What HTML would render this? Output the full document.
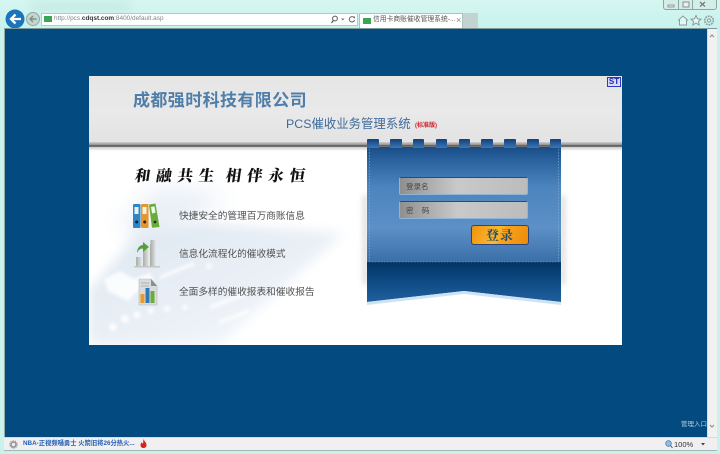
<!DOCTYPE html>
<html lang="zh-CN"><head><meta charset="utf-8"><title>信用卡商账催收管理系统</title>
<style>
*{box-sizing:border-box}
html,body{margin:0;padding:0;width:720px;height:454px;overflow:hidden}
body{position:relative;background:#c9f2ec;font-family:"Liberation Sans","Noto Sans CJK SC",sans-serif}
.a{position:absolute}
.t{position:absolute;white-space:nowrap;line-height:1}
</style></head><body>
<div class="a" style="left:0;top:0;width:720px;height:30px;background:linear-gradient(#d6f6f1,#c6f2ec)"></div>
<div class="a" style="left:30px;top:2px;width:100px;height:9px;background:#bfe6dc;filter:blur(5px);opacity:.7"></div>

<!-- nav buttons -->
<svg class="a" style="left:0;top:5px" width="42" height="26" viewBox="0 0 42 26">
<circle cx="33" cy="14" r="6.500" fill="#c4d6ce" stroke="#8fa8a0"/>
<path d="M36.500 14h-6M33 11l-3 3 3 3" fill="none" stroke="#7d8f88" stroke-width="1.400"/>
<circle cx="15" cy="14" r="9.500" fill="#1c75bb"/>
<path d="M21 14h-10M15.500 9.500L11 14l4.500 4.500" fill="none" stroke="#fff" stroke-width="2.300"/>
</svg>

<!-- address bar -->
<div class="a" style="left:41px;top:13px;width:317px;height:13px;background:#fff;border:1px solid #a9cfc9"></div>
<div class="a" style="left:44px;top:16px;width:8px;height:6px;background:#3aa655"></div>
<div class="t" style="left:54px;top:16px;font-size:6.450px;color:#7b8488">http://pcs.<b style="color:#2d3338">cdqst.com</b>:8400/default.asp</div>
<svg class="a" style="left:330px;top:14px" width="27" height="11" viewBox="0 0 27 11">
<circle cx="5" cy="4.500" r="2.400" fill="none" stroke="#555" stroke-width="1"/><path d="M3.300 6.500L1.500 9" stroke="#555" stroke-width="1.200"/>
<path d="M11 4.500h3.500l-1.750 2z" fill="#777"/>
<path d="M24 3.500a2.700 2.700 0 1 0 .6 2.500" fill="none" stroke="#666"/><path d="M22.500 2.500h2.500v2.200z" fill="#666"/>
</svg>

<!-- tab -->
<div class="a" style="left:359px;top:13px;width:104px;height:16px;background:#fff;border:1px solid #a9c5c2;border-bottom:0"></div>
<div class="a" style="left:463px;top:13px;width:15px;height:15px;background:#c3d3d0"></div>
<div class="a" style="left:363px;top:18px;width:8px;height:6px;background:#3aa655"></div>
<div class="t" style="left:373px;top:17px;font-size:6.800px;color:#555">信用卡商账催收管理系统-...</div>
<div class="t" style="left:456px;top:16px;font-size:9px;color:#888">×</div>

<!-- window controls -->
<div class="a" style="left:663px;top:0;width:54px;height:10px;background:#d2eee9;border:1px solid #8fa5a3;border-top:0;border-radius:0 0 3px 3px"></div>
<div class="a" style="left:678px;top:0;width:1px;height:10px;background:#8fa5a3"></div>
<div class="a" style="left:692px;top:0;width:1px;height:10px;background:#8fa5a3"></div>
<svg class="a" style="left:663px;top:0" width="54" height="10" viewBox="0 0 54 10">
<rect x="5" y="5" width="6" height="2" fill="#eee" stroke="#777" stroke-width=".7"/>
<rect x="20" y="2" width="6" height="5" fill="#eee" stroke="#777" stroke-width=".8"/>
<path d="M37 2l5 4.500M42 2l-5 4.500" stroke="#777" stroke-width="1.200"/>
</svg>
<svg class="a" style="left:676px;top:14px" width="40" height="13" viewBox="0 0 40 13">
<path d="M2 6.500L7 2l5 4.500M3.500 6v5h7V6" fill="#e4f7f4" stroke="#8b9c9b" stroke-width="1"/>
<path d="M20 1.500l1.500 3.300 3.500.4-2.600 2.300.8 3.500-3.200-1.900-3.200 1.900.8-3.500L15 5.200l3.500-.4z" fill="#e4f7f4" stroke="#8b9c9b"/>
<circle cx="33" cy="6.500" r="4.300" fill="none" stroke="#8b9c9b" stroke-width="1.600" stroke-dasharray="1.800 .9"/><circle cx="33" cy="6.500" r="1.700" fill="none" stroke="#8b9c9b"/>
</svg>

<!-- content frame -->
<div class="a" style="left:4px;top:28px;width:713px;height:1px;background:#7e9a9d"></div>
<div class="a" style="left:4px;top:28px;width:1px;height:410px;background:#90aaa8"></div>
<div class="a" style="left:5px;top:29px;width:702px;height:408px;background:#024a7f"></div>
<div class="a" style="left:707px;top:29px;width:10px;height:408px;background:#f1f1f1;border-left:1px solid #dcdcdc"></div>
<svg class="a" style="left:708px;top:33px" width="8" height="6" viewBox="0 0 8 6"><path d="M2 4l2-2 2 2" fill="none" stroke="#888"/></svg>
<svg class="a" style="left:708px;top:423px" width="8" height="6" viewBox="0 0 8 6"><path d="M2 2l2 2 2-2" fill="none" stroke="#888"/></svg>
<div class="t" style="left:681px;top:422px;font-size:6.500px;color:#b9cfe0">管理入口</div>

<!-- panel -->
<div class="a" style="left:89px;top:76px;width:533px;height:269px;background:#fff;overflow:hidden">
  <svg class="a" style="left:0;top:65px" width="533" height="204" viewBox="0 0 533 204">
    <defs>
      <filter id="b1" x="-20%" y="-20%" width="140%" height="140%"><feGaussianBlur stdDeviation="12"/></filter>
      <filter id="b2" x="-20%" y="-20%" width="140%" height="140%"><feGaussianBlur stdDeviation="1.500"/></filter>
      <filter id="b3" x="-20%" y="-20%" width="140%" height="140%"><feGaussianBlur stdDeviation="6"/></filter>
      <linearGradient id="wm" x1="0" y1="0" x2="1" y2="1"><stop offset="0" stop-color="#dbe5f0"/><stop offset=".6" stop-color="#ecf1f7"/><stop offset="1" stop-color="#fafcfd"/></linearGradient>
    </defs>
    <path d="M30 80L70 45 140 55 60 110z" fill="#e9eff6" filter="url(#b1)"/>
    <path d="M0 150L50 92 110 82 255 92 130 204H0z" fill="url(#wm)" filter="url(#b3)"/>
    <g filter="url(#b2)" fill="#fff" opacity=".85">
      <path d="M15 138l16-8 14 8 16-6 4 8-18 12-8 8-20-10z"/>
      <circle cx="24" cy="186" r="4"/><circle cx="36" cy="178" r="4"/><circle cx="48" cy="174" r="3.500"/><circle cx="62" cy="170" r="3"/><circle cx="78" cy="168" r="3"/><circle cx="96" cy="166" r="2.500"/>
      <circle cx="120" cy="125" r="3"/><circle cx="146" cy="115" r="2.500"/><circle cx="170" cy="110" r="2"/>
      <path d="M70 135l34-14 2 3-34 14zM120 165l36-14 2 3-36 14zM130 180l30-12 1 3-30 12z"/>
    </g>
  </svg>

  <!-- header -->
  <div class="a" style="left:0;top:0;width:533px;height:66px;background:linear-gradient(#e6e6e6,#e9e9e9 55%,#e3e3e3)"></div>
  <div class="a" style="left:0;top:66px;width:533px;height:3px;background:linear-gradient(#cfcfcf,#8f8f8f)"></div>
  <div class="a" style="left:0;top:69px;width:533px;height:2px;background:linear-gradient(#5f5f5f,#777)"></div>
  <div class="a" style="left:0;top:71px;width:533px;height:4px;background:linear-gradient(#c8c8c8,#fff)"></div>
</div>

<div class="t" style="left:133px;top:92px;font-size:17px;font-weight:700;letter-spacing:.4px;color:#4f7ea9">成都强时科技有限公司</div>
<div class="t" style="left:286px;top:118px;font-size:12.400px;color:#3e6b9b">PCS催收业务管理系统</div>
<div class="t" style="left:415px;top:123px;font-size:6px;font-weight:700;color:#d3202c">(标准版)</div>
<div class="a" style="left:607px;top:77px;width:14px;height:10px;background:#d9dcf5;border:1px solid #3038c8;color:#1c24b8;font:700 8px/8px 'Liberation Sans',sans-serif;text-align:center">ST</div>

<div class="t" style="left:135px;top:168px;font-family:'Noto Serif CJK SC',serif;font-size:15.500px;font-weight:900;color:#111;letter-spacing:5.800px;word-spacing:-4px;transform:skewX(-8deg)">和融共生 相伴永恒</div>

<!-- feature list -->
<svg class="a" style="left:132px;top:202px" width="30" height="26" viewBox="0 0 30 26">
<rect x="1" y="2" width="7.500" height="24" rx="1" fill="#2e86c4"/><rect x="2.500" y="5" width="4" height="7" fill="#e9f1f7"/><circle cx="4.700" cy="20" r="1.500" fill="#123"/>
<rect x="9" y="2" width="7.500" height="24" rx="1" fill="#e6962a"/><rect x="10.500" y="5" width="4" height="7" fill="#fbf2e0"/><circle cx="12.700" cy="20" r="1.500" fill="#321"/>
<path d="M17 2.500l6.500-1 4 23.500-7.500.7z" fill="#68ad3a"/><path d="M19 5l3.500-.7 1 6.500-3.500.7z" fill="#f0f7e6"/><circle cx="23" cy="20" r="1.400" fill="#232"/>
</svg>
<svg class="a" style="left:134px;top:239px" width="26" height="29" viewBox="0 0 26 29">
<defs><linearGradient id="g" x1="0" x2="1"><stop offset="0" stop-color="#a8aeaa"/><stop offset="1" stop-color="#dfe2df"/></linearGradient></defs>
<rect x="2" y="18" width="5.500" height="9" fill="url(#g)"/><rect x="9" y="10" width="5.500" height="17" fill="url(#g)"/><rect x="16" y="5" width="5.500" height="22" fill="url(#g)"/>
<rect x="17" y="1" width="5" height="26" fill="url(#g)" transform="translate(-.5 0)"/>
<path d="M3 14c0-5 3-8 6-8V3l6 5-6 5V9.500C6 9.500 4.500 11 3 14z" fill="#5a9e3a"/>
<rect x="0" y="27" width="26" height="1.500" fill="#c3c6c3"/>
</svg>
<svg class="a" style="left:135px;top:278px" width="24" height="29" viewBox="0 0 24 29">
<path d="M4 1h12l6 7v19H4z" fill="#d9dcdc" stroke="#b5b8b8" stroke-width=".6"/><path d="M16 1l6 7h-6z" fill="#8a8f92"/>
<path d="M6 5h8M6 8h8" stroke="#aeb2b2"/>
<rect x="5.500" y="16" width="4" height="9" fill="#ec9a25"/><rect x="10.500" y="10" width="4" height="15" fill="#2f78bd"/><rect x="15.500" y="13" width="4" height="12" fill="#6bad35"/>
</svg>
<div class="t" style="left:179px;top:212px;font-size:9.700px;color:#505050">快捷安全的管理百万商账信息</div>
<div class="t" style="left:179px;top:250px;font-size:9.700px;color:#505050">信息化流程化的催收模式</div>
<div class="t" style="left:179px;top:288px;font-size:9.700px;color:#505050">全面多样的催收报表和催收报告</div>

<!-- ribbon -->
<svg class="a" style="left:355px;top:135px" width="220" height="180" viewBox="0 0 220 180">
<defs>
<linearGradient id="r" x1="0" y1="0" x2="0" y2="1"><stop offset="0" stop-color="#1a4c86"/><stop offset=".12" stop-color="#2a64a0"/><stop offset=".35" stop-color="#4c84bd"/><stop offset=".7" stop-color="#5c90c6"/><stop offset="1" stop-color="#3b6fa8"/></linearGradient>
<linearGradient id="d" x1="0" y1="0" x2="0" y2="1"><stop offset="0" stop-color="#023464"/><stop offset=".5" stop-color="#0f4b85"/><stop offset="1" stop-color="#1f5f9e"/></linearGradient>
<linearGradient id="tk" x1="0" y1="0" x2="0" y2="1"><stop offset="0" stop-color="#133f78"/><stop offset="1" stop-color="#3a78b4"/></linearGradient>
<filter id="s" x="-50%" y="-20%" width="200%" height="140%"><feGaussianBlur stdDeviation="3"/></filter>
</defs>
<path d="M10 60V150M208 60V150" stroke="#999" stroke-width="3" filter="url(#s)" opacity=".5"/>
<path d="M12 12H206V127H12z" fill="url(#r)"/>
<path d="M12 127H206V167L109 156 12 167z" fill="url(#d)"/>
<path d="M12 167L109 156 206 167v3L109 159 12 170z" fill="#cfe2f2"/>
<path d="M14.500 14V126M203.500 14V126" stroke="#86aed5" stroke-width=".6" stroke-dasharray="1.500 1.500"/>
<path d="M14 127H204" stroke="#7ba5cf" stroke-width=".5" stroke-dasharray="1.500 1.500"/>
<g fill="url(#tk)">
<rect x="12" y="4" width="12" height="9" rx="1"/><rect x="35" y="4" width="12" height="9" rx="1"/><rect x="58" y="4" width="11" height="9" rx="1"/><rect x="81" y="4" width="11" height="9" rx="1"/><rect x="104" y="4" width="11" height="9" rx="1"/><rect x="126" y="4" width="12" height="9" rx="1"/><rect x="149" y="4" width="12" height="9" rx="1"/><rect x="172" y="4" width="12" height="9" rx="1"/><rect x="195" y="4" width="11" height="9" rx="1"/>
</g>
</svg>

<!-- inputs -->
<div class="a" style="left:399px;top:177px;width:129px;height:18px;border-radius:2px;border:1px solid #8fb4d6;border-top:1px solid #2c4a72;background:linear-gradient(90deg,#8f8f8f,#c9c9c9 45%,#bcbcbc)"></div>
<div class="a" style="left:399px;top:201px;width:129px;height:18px;border-radius:2px;border:1px solid #8fb4d6;border-top:1px solid #2c4a72;background:linear-gradient(90deg,#8f8f8f,#c9c9c9 45%,#bcbcbc)"></div>
<div class="t" style="left:406px;top:183px;font-size:7.500px;color:#444">登录名</div>
<div class="t" style="left:406px;top:207px;font-size:7.500px;color:#444">密&nbsp;&nbsp;&nbsp;&nbsp;码</div>

<!-- button -->
<div class="a" style="left:471px;top:225px;width:58px;height:20px;border-radius:3px;border:1px solid #2c4478;background:linear-gradient(115deg,#f0930f,#fcb92c 45%,#f9a41b 55%,#ee8a0b)"></div>
<div class="t" style="left:486px;top:228px;font-family:'Noto Serif CJK SC',serif;font-size:13px;font-weight:700;color:#24496f;letter-spacing:1px">登录</div>

<!-- status bar -->
<div class="a" style="left:4px;top:437px;width:713px;height:13px;background:#f1eff0;border-top:1px solid #d9d9d9"></div>
<div class="a" style="left:4px;top:450px;width:713px;height:1px;background:#9fb9b6"></div>
<svg class="a" style="left:9px;top:440px" width="9" height="9" viewBox="0 0 9 9"><circle cx="4.500" cy="4.500" r="2.500" fill="none" stroke="#999" stroke-width="1.800"/><circle cx="4.500" cy="4.500" r="3.800" fill="none" stroke="#999" stroke-width="1" stroke-dasharray="1.200 1.200"/></svg>
<div class="t" style="left:23px;top:441px;font-size:6.300px;font-weight:700;color:#2160b4">NBA-正视频嗵勇士 火箭旧将26分热火...</div>
<svg class="a" style="left:140px;top:439px" width="7" height="9" viewBox="0 0 7 9"><path d="M3.500 0C4 2 6.500 3.500 6.500 6c0 2-1.500 3-3 3s-3-1-3-3C.500 4.500 1.500 4 2 3c0 1 .5 1.500 1 1.500C3.500 3 3 1.500 3.500 0z" fill="#e0201c"/></svg>
<svg class="a" style="left:665px;top:440px" width="8" height="9" viewBox="0 0 8 9"><circle cx="3.500" cy="3.500" r="2.800" fill="#8fc0e6" stroke="#4d7da8" stroke-width=".8"/><path d="M5.500 5.500L7.500 8" stroke="#555"/></svg>
<div class="t" style="left:674px;top:441px;font-size:7.500px;color:#333">100%</div>
<svg class="a" style="left:700px;top:442px" width="6" height="5" viewBox="0 0 6 5"><path d="M1 1h4L3 3.500z" fill="#444"/></svg>
</body></html>
